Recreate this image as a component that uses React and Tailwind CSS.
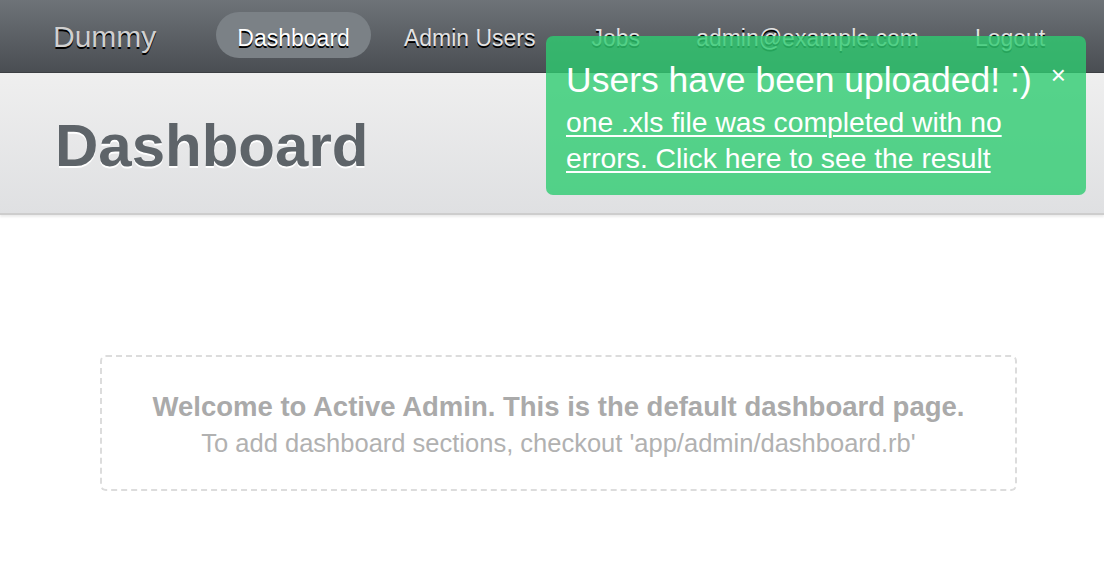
import React from 'react';

const navItems = ['Admin Users', 'Jobs', 'admin@example.com', 'Logout'];

export default function App() {
  return (
    <div className="relative min-h-[568px] bg-white font-['Liberation_Sans',Arial,sans-serif]">
      {/* Header */}
      <div className="flex h-[73px] items-start bg-gradient-to-b from-[#6e7378] to-[#4a4e53] border-b border-[#3c3f43] pl-[53px]">
        <span className="mt-[12px] flex h-[46px] items-center pt-[3px] text-[30px] text-[#d0d0d0] [text-shadow:0_2px_0_#000] mr-[60px]">Dummy</span>
        <span className="mt-[12px] flex h-[46px] items-center rounded-full bg-[#7b8186] px-[21px] pt-[6px] text-[23px] text-white [text-shadow:0_2px_0_#000]">Dashboard</span>
        <div className="ml-[33px] mt-[12px] flex h-[46px] items-center gap-[56px] pt-[6px] text-[23px] text-[#e3e3e3] [text-shadow:0_2px_0_#000]">
          {navItems.map(item => (
            <span key={item}>{item}</span>
          ))}
        </div>
      </div>

      {/* Title bar */}
      <div className="flex h-[142px] items-center bg-gradient-to-b from-[#efefef] to-[#dfe0e2] border-b-2 border-[#cdcdcd] shadow-[0_2px_2px_rgba(0,0,0,0.08)] pl-[55px]">
        <h2 className="text-[60px] font-bold text-[#5e6469] [text-shadow:0_2px_0_#fff] pt-[5px]">Dashboard</h2>
      </div>

      {/* Content */}
      <div className="pt-[140px] pl-[100px]">
        <div className="flex w-[917px] h-[136px] flex-col items-center justify-center rounded-[6px] border-2 border-dashed border-[#dcdcdc] text-[#aaaaaa]">
          <p className="text-[27.5px] font-bold leading-[36px] pt-[3px]">Welcome to Active Admin. This is the default dashboard page.</p>
          <p className="text-[25.5px] leading-[36px] text-[#b1b1b1]">To add dashboard sections, checkout 'app/admin/dashboard.rb'</p>
        </div>
      </div>

      {/* Flash toast */}
      <div className="absolute left-[546px] top-[36px] w-[540px] h-[159px] rounded-[7px] bg-[#2ecc71]/80 pl-[20px] pt-[23px] text-white">
        <div className="flex items-start">
          <span className="text-[35.5px] leading-[42px]">Users have been uploaded! :)</span>
          <span className="ml-[19px] mt-[-4px] text-[26px] leading-[40px]">×</span>
        </div>
        <a className="block mt-[3px] text-[28.3px] leading-[36px] underline underline-offset-[3px] decoration-[2px]">
          one .xls file was completed with no<br />errors. Click here to see the result
        </a>
      </div>
    </div>
  );
}
